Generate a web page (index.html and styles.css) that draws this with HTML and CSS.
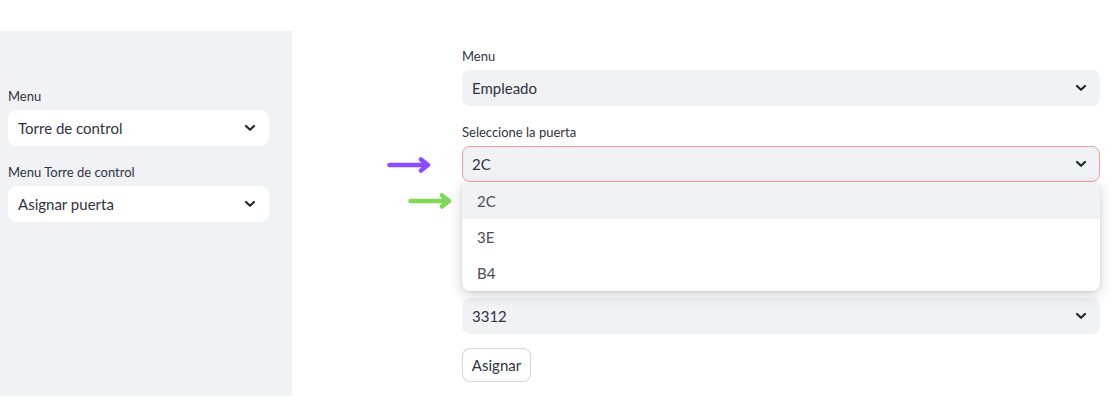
FILE: index.html
```html
<!DOCTYPE html>
<html lang="es">
<head>
<meta charset="utf-8">
<title>Torre de control</title>
<link rel="stylesheet" href="styles.css">
</head>
<body>
<div class="app">
  <aside class="sidebar">
    <div class="field">
      <div class="label">Menu</div>
      <div class="select select-white"><span>Torre de control</span><svg class="chev" viewBox="0 0 12 8"><path d="M2 2 L6 5.8 L10 2"/></svg></div>
    </div>
    <div class="field">
      <div class="label">Menu Torre de control</div>
      <div class="select select-white"><span>Asignar puerta</span><svg class="chev" viewBox="0 0 12 8"><path d="M2 2 L6 5.8 L10 2"/></svg></div>
    </div>
  </aside>
  <main class="main">
    <div class="field">
      <div class="label">Menu</div>
      <div class="select"><span>Empleado</span><svg class="chev" viewBox="0 0 12 8"><path d="M2 2 L6 5.8 L10 2"/></svg></div>
    </div>
    <div class="field field-open">
      <div class="label">Seleccione la puerta</div>
      <div class="select select-focus"><span>2C</span><svg class="chev" viewBox="0 0 12 8"><path d="M2 2 L6 5.8 L10 2"/></svg></div>
      <ul class="dropdown">
        <li class="opt opt-active">2C</li>
        <li class="opt">3E</li>
        <li class="opt">B4</li>
      </ul>
      <svg class="arrow arrow-purple" viewBox="0 0 46 16"><path d="M2.5 8 H40 M34 2.5 L41 8 L34 13.5"/></svg>
      <svg class="arrow arrow-green" viewBox="0 0 46 16"><path d="M2.5 8 H40 M34 2.5 L41 8 L34 13.5"/></svg>
    </div>
    <div class="hidden-space"></div>
    <div class="field">
      <div class="select"><span>3312</span><svg class="chev" viewBox="0 0 12 8"><path d="M2 2 L6 5.8 L10 2"/></svg></div>
    </div>
    <button class="btn">Asignar</button>
  </main>
</div>
</body>
</html>
```
FILE: styles.css
```css
* { box-sizing: border-box; }
html, body { margin: 0; padding: 0; background: #ffffff; }
body {
  font-family: "Source Sans Pro", "Lato", "Noto Sans", sans-serif;
  color: #31333f;
  width: 1120px;
  height: 411px;
  overflow: hidden;
}
.app {
  display: flex;
  align-items: flex-start;
}
.sidebar {
  margin-top: 31px;
  width: 292px;
  height: 365px;
  background: #f0f2f6;
  padding: 55px 23px 0 8px;
  display: flex;
  flex-direction: column;
  gap: 16px;
}
.main {
  flex: 1;
  padding: 46px 20px 0 170px;
  display: flex;
  flex-direction: column;
  gap: 16px;
}
.field { position: relative; display: flex; flex-direction: column; }
.label {
  font-size: 13px;
  line-height: 20px;
  height: 20px;
  margin-bottom: 4px;
  color: #31333f;
}
.select {
  height: 36px;
  border-radius: 8px;
  background: #f0f2f6;
  border: 1px solid #f0f2f6;
  display: flex;
  align-items: center;
  justify-content: space-between;
  padding: 0 12px 0 9px;
  font-size: 15px;
  color: #31333f;
}
.select-white { background: #ffffff; border-color: #ffffff; }
.select-focus { border-color: #f79a9a; }
.chev {
  width: 12px;
  height: 8px;
  fill: none;
  stroke: #262730;
  stroke-width: 2.2;
  stroke-linecap: round;
  stroke-linejoin: round;
}
.dropdown {
  position: absolute;
  left: 0;
  right: 0;
  top: 61px;
  margin: 0;
  padding: 0;
  list-style: none;
  background: #ffffff;
  border-radius: 0 0 8px 8px;
  box-shadow: 0 4px 14px rgba(0, 0, 0, 0.18), 0 1px 3px rgba(0, 0, 0, 0.08);
  z-index: 5;
  overflow: hidden;
}
.opt {
  height: 36px;
  line-height: 36px;
  padding-left: 15px;
  font-size: 15px;
  color: #4a4c57;
}
.opt-active { background: #f0f2f6; }
.hidden-space { height: 84px; }
.btn {
  align-self: flex-start;
  margin-top: -2px;
  height: 34px;
  width: 69px;
  padding: 0;
  border: 1px solid rgba(49, 51, 63, 0.2);
  border-radius: 8px;
  background: #ffffff;
  font-family: inherit;
  font-size: 15px;
  color: #31333f;
}
.arrow {
  position: absolute;
  width: 46px;
  height: 16px;
  fill: none;
  stroke-width: 4.5;
  stroke-linecap: round;
  stroke-linejoin: round;
}
.arrow-purple { left: -75px; top: 35px; stroke: #8a4dff; }
.arrow-green { left: -54px; top: 71px; stroke: #7ed957; }
```
